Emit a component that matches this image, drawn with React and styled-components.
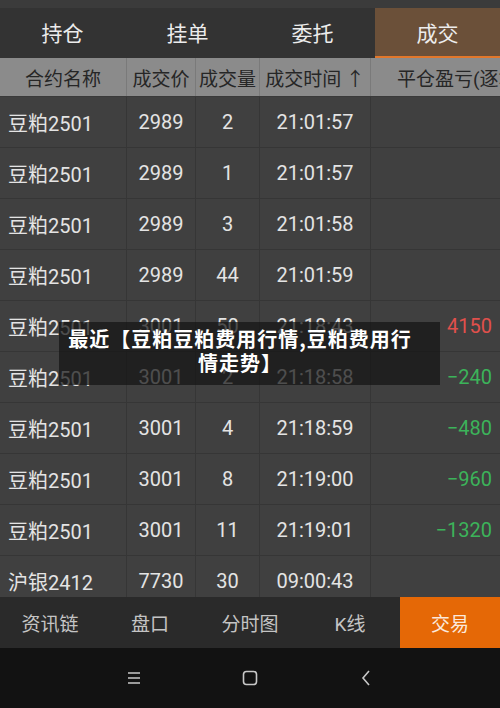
import React from 'react';
import styled, { createGlobalStyle } from 'styled-components';

const GlobalStyle = createGlobalStyle`
  html, body {
    margin: 0;
    padding: 0;
    background: #404040;
  }
  body {
    font-family: Roboto, "Noto Sans CJK SC", sans-serif;
  }
`;

const Screen = styled.div`
  width: 500px;
  height: 708px;
  display: flex;
  flex-direction: column;
  overflow: hidden;
  position: relative;
`;

const TopStrip = styled.div`
  height: 8px;
  background: #3b3b3b;
  flex-shrink: 0;
`;

const Tabs = styled.div`
  display: flex;
  height: 50px;
  background: #333333;
  flex-shrink: 0;
`;

const Tab = styled.div`
  flex: 1;
  display: flex;
  align-items: center;
  justify-content: center;
  box-sizing: border-box;
  font-size: 21px;
  color: #ececec;
  background: ${p => (p.active ? '#6b5039' : 'transparent')};
  border-bottom: 2px solid ${p => (p.active ? '#e2772a' : 'transparent')};
`;

const cols = '127px 69px 64px 111px 1fr';

const HeaderRow = styled.div`
  display: grid;
  grid-template-columns: ${cols};
  height: 39px;
  background: #8b8b8b;
  flex-shrink: 0;
  border-bottom: 1px solid #3a3a3a;
  box-sizing: border-box;
`;

const HeadCell = styled.div`
  display: flex;
  align-items: center;
  justify-content: ${p => (p.left ? 'flex-start' : 'center')};
  padding-left: ${p => (p.left ? '26px' : '0')};
  font-size: 19px;
  color: #262626;
  white-space: nowrap;
  overflow: hidden;
  border-right: ${p => (p.last ? 'none' : '1px solid #7a7a7a')};
`;

const Body = styled.div`
  flex: 1;
  overflow: hidden;
  position: relative;
`;

const Row = styled.div`
  display: grid;
  grid-template-columns: ${cols};
  height: 51px;
  box-sizing: border-box;
  border-bottom: 1px solid #363636;
  background: #404040;
`;

const Cell = styled.div`
  display: flex;
  align-items: center;
  justify-content: ${p => p.align || 'center'};
  padding: 0 ${p => (p.align ? '8px' : '0')};
  font-size: 20px;
  color: ${p => p.color || '#e4e4e4'};
  white-space: nowrap;
  border-right: ${p => (p.last ? 'none' : '1px solid #363636')};
`;

const Caption = styled.div`
  position: absolute;
  left: 59px;
  top: 225px;
  width: 381px;
  height: 63px;
  box-sizing: border-box;
  padding: 5px 28px 0 9px;
  background: rgba(20, 20, 20, 0.72);
  color: #ffffff;
  font-family: "Noto Sans CJK SC", sans-serif;
  font-weight: 700;
  font-size: 20px;
  letter-spacing: 1px;
  line-height: 24px;
  text-align: center;
`;

const BottomNav = styled.div`
  display: flex;
  height: 51px;
  background: #2a2a2a;
  flex-shrink: 0;
`;

const NavItem = styled.div`
  flex: 1;
  display: flex;
  align-items: center;
  justify-content: center;
  font-size: 19px;
  color: ${p => (p.active ? '#fbe9dc' : '#c4c4c4')};
  background: ${p => (p.active ? '#e56806' : 'transparent')};
`;

const SysNav = styled.div`
  height: 60px;
  background: #121212;
  flex-shrink: 0;
  display: flex;
  align-items: center;
  justify-content: center;
  gap: 96px;
`;

const SysIcon = styled.svg`
  width: 20px;
  height: 20px;
  stroke: #c8c8c8;
  fill: none;
  stroke-width: 1.6;
`;

const tabs = ['持仓', '挂单', '委托', '成交'];

const rows = [
  ['豆粕2501', '2989', '2', '21:01:57', ''],
  ['豆粕2501', '2989', '1', '21:01:57', ''],
  ['豆粕2501', '2989', '3', '21:01:58', ''],
  ['豆粕2501', '2989', '44', '21:01:59', ''],
  ['豆粕2501', '3001', '50', '21:18:43', '4150'],
  ['豆粕2501', '3001', '2', '21:18:58', '-240'],
  ['豆粕2501', '3001', '4', '21:18:59', '-480'],
  ['豆粕2501', '3001', '8', '21:19:00', '-960'],
  ['豆粕2501', '3001', '11', '21:19:01', '-1320'],
  ['沪银2412', '7730', '30', '09:00:43', ''],
];

const navs = ['资讯链', '盘口', '分时图', 'K线', '交易'];

function pnlColor(v) {
  if (!v) return undefined;
  return v.startsWith('-') ? '#3cb35a' : '#e0504c';
}

export default function App() {
  return (
    <Screen>
      <GlobalStyle />
      <TopStrip />
      <Tabs>
        {tabs.map((t, i) => (
          <Tab key={t} active={i === 3}>{t}</Tab>
        ))}
      </Tabs>
      <HeaderRow>
        <HeadCell>合约名称</HeadCell>
        <HeadCell>成交价</HeadCell>
        <HeadCell>成交量</HeadCell>
        <HeadCell>成交时间 ↑</HeadCell>
        <HeadCell left last>平仓盈亏(逐笔)</HeadCell>
      </HeaderRow>
      <Body>
        {rows.map((r, i) => (
          <Row key={i}>
            <Cell align="flex-start">{r[0]}</Cell>
            <Cell>{r[1]}</Cell>
            <Cell>{r[2]}</Cell>
            <Cell>{r[3]}</Cell>
            <Cell align="flex-end" last color={pnlColor(r[4])}>
              {r[4].replace('-', '−')}
            </Cell>
          </Row>
        ))}
        <Caption>最近【豆粕豆粕费用行情,豆粕费用行情走势】</Caption>
      </Body>
      <BottomNav>
        {navs.map((n, i) => (
          <NavItem key={n} active={i === 4}>{n}</NavItem>
        ))}
      </BottomNav>
      <SysNav>
        <SysIcon viewBox="0 0 20 20">
          <path d="M4 5h12M4 10h12M4 15h12" />
        </SysIcon>
        <SysIcon viewBox="0 0 20 20">
          <rect x="3.5" y="3.5" width="13" height="13" rx="3" />
        </SysIcon>
        <SysIcon viewBox="0 0 20 20">
          <path d="M13 3l-6 7 6 7" />
        </SysIcon>
      </SysNav>
    </Screen>
  );
}
